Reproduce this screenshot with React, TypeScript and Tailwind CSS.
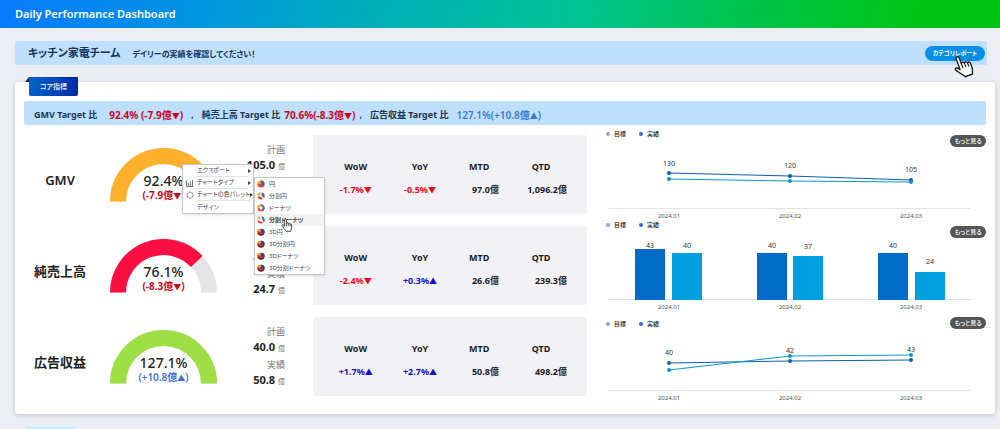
import { useState } from 'react';
import clsx from 'clsx';

interface Metric {
  label: string;
  value: string;
  trend?: 'up' | 'down';
}

interface Kpi {
  name: string;
  percent: string;
  ratio: number;
  color: string;
  diff: string;
  trend: 'up' | 'down';
  plan: string;
  actual: string;
  metrics: Metric[];
}

const kpis: Kpi[] = [
  {
    name: 'GMV',
    percent: '92.4%',
    ratio: 0.924,
    color: '#ffb12e',
    diff: '-7.9億',
    trend: 'down',
    plan: '105.0',
    actual: '97.0',
    metrics: [
      { label: 'WoW', value: '-1.7%', trend: 'down' },
      { label: 'YoY', value: '-0.5%', trend: 'down' },
      { label: 'MTD', value: '97.0億' },
      { label: 'QTD', value: '1,096.2億' },
    ],
  },
  {
    name: '純売上高',
    percent: '76.1%',
    ratio: 0.761,
    color: '#fb0f42',
    diff: '-8.3億',
    trend: 'down',
    plan: '35.0',
    actual: '24.7',
    metrics: [
      { label: 'WoW', value: '-2.4%', trend: 'down' },
      { label: 'YoY', value: '+0.3%', trend: 'up' },
      { label: 'MTD', value: '26.6億' },
      { label: 'QTD', value: '239.3億' },
    ],
  },
  {
    name: '広告収益',
    percent: '127.1%',
    ratio: 1,
    color: '#9fdf46',
    diff: '+10.8億',
    trend: 'up',
    plan: '40.0',
    actual: '50.8',
    metrics: [
      { label: 'WoW', value: '+1.7%', trend: 'up' },
      { label: 'YoY', value: '+2.7%', trend: 'up' },
      { label: 'MTD', value: '50.8億' },
      { label: 'QTD', value: '498.2億' },
    ],
  },
];

const months = ['2024.01', '2024.02', '2024.03'];
const monthX = [66, 187, 308];

const chartTypes = [
  { label: '円', kind: 'pie' },
  { label: '分割円', kind: 'split' },
  { label: 'ドーナツ', kind: 'donut' },
  { label: '分割ドーナツ', kind: 'splitDonut' },
  { label: '3D円', kind: 'pie3d' },
  { label: '3D分割円', kind: 'pie3d' },
  { label: '3Dドーナツ', kind: 'pie3d' },
  { label: '3D分割ドーナツ', kind: 'pie3d' },
];

function Mark({ trend }: { trend?: 'up' | 'down' }) {
  if (!trend) return null;
  return <span className="text-[8px]">{trend === 'up' ? '▲' : '▼'}</span>;
}

function HandCursor({ className }: { className?: string }) {
  return (
    <svg viewBox="0 0 20 24" className={className} aria-hidden="true">
      <path
        d="M6 14.5V3.2C6 .7 9.2.7 9.2 3.2V9.6C9.4 8 12.2 8 12.3 10C12.6 8.5 15.2 8.8 15.3 10.8C15.7 9.6 18 10 18 12V16.5C18 19.2 16.6 20.4 16.3 22.8H8.3C8 20.7 5 18.6 3.4 15.7C2.4 14 1 12.8 1.8 11.9C3 10.7 4.7 12.3 6 14.5Z"
        fill="#fff"
        stroke="#222"
        strokeWidth="1.4"
        strokeLinejoin="round"
      />
      <path d="M9.2 9.6V14M12.3 10V14M15.3 10.8V14.4" stroke="#222" strokeWidth="1.2" />
    </svg>
  );
}

function PieIcon({ kind }: { kind: string }) {
  const hollow = kind === 'donut' || kind === 'splitDonut';
  const split = kind === 'split' || kind === 'splitDonut';

  if (kind === 'pie3d') {
    return (
      <svg viewBox="0 0 16 16" className="h-2 w-2 shrink-0" aria-hidden="true">
        <path d="M1 7v3c0 7 14 7 14 0V7z" fill="#5c1f2b" />
        <ellipse cx="8" cy="7" rx="7" ry="5.5" fill="#c8382a" />
        <path d="M8 7V1.5c4 0 7 2.5 7 5.5 0 2-1 3.5-3 4.500z" fill="#27489c" />
        <path d="M8 7V1.5C4 1.5 1 4 1 7z" fill="#f4a02c" />
      </svg>
    );
  }
  return (
    <svg viewBox="0 0 16 16" className="h-2 w-2 shrink-0" aria-hidden="true">
      <circle cx="8" cy="8" r="7" fill="#e4492c" />
      <path d="M8 8H1a7 7 0 0 1 7-7z" fill="#f9ab2d" />
      <path d="M8 8V1a7 7 0 0 1 5 12z" fill="#2d6fc8" />
      {split && <path d="M8 0v8l6 6M8 8H0" stroke="#fff" strokeWidth="2.4" fill="none" />}
      {hollow && <circle cx="8" cy="8" r="3.4" fill="#fff" />}
    </svg>
  );
}

function Gauge({ kpi }: { kpi: Kpi }) {
  const radius = 45.5;
  const angle = Math.PI * (1 - kpi.ratio);
  const x = 53.5 + radius * Math.cos(angle);
  const y = 53.5 - radius * Math.sin(angle);

  return (
    <div className="grid w-[107px] shrink-0">
      <svg viewBox="0 0 107 54" className="col-start-1 row-start-1 w-full" aria-hidden="true">
        <path d="M8 53.5A45.5 45.5 0 0 1 99 53.5" fill="none" stroke="#e5e5e7" strokeWidth="16" />
        <path
          d={`M8 53.5A45.5 45.5 0 0 1 ${x} ${y}`}
          fill="none"
          stroke={kpi.color}
          strokeWidth="16"
        />
      </svg>
      <div className="col-start-1 row-start-1 self-end text-center">
        <div className="text-[14px] leading-4 font-medium text-[#222]">{kpi.percent}</div>
        <div
          className={clsx(
            'text-[10px] leading-3',
            kpi.trend === 'up' ? 'font-semibold text-[#3b73d9]' : 'font-bold text-[#c40d1e]',
          )}
        >
          ({kpi.diff}
          <Mark trend={kpi.trend} />)
        </div>
      </div>
    </div>
  );
}

function PlanActual({ kpi }: { kpi: Kpi }) {
  return (
    <dl className="flex-1 text-right whitespace-nowrap">
      {[
        ['計画', kpi.plan],
        ['実績', kpi.actual],
      ].map(([label, value]) => (
        <div key={label}>
          <dt className="text-[9px] leading-[15px] text-[#777]">{label}</dt>
          <dd className="text-[11px] leading-4 font-bold text-[#222]">
            {value} <span className="text-[7px] font-normal text-[#777]">億</span>
          </dd>
        </div>
      ))}
    </dl>
  );
}

function MetricTable({ metrics }: { metrics: Metric[] }) {
  return (
    <div className="rounded-xs bg-[#f1f1f6] pt-5 pr-3 pb-[13px] pl-[10px]">
      <table className="w-full table-fixed text-[9px] leading-[23px] font-bold text-[#1d1d1f]">
        <colgroup>
          <col className="w-[26%]" />
          <col className="w-[25%]" />
          <col className="w-[22%]" />
          <col className="w-[27%]" />
        </colgroup>
        <thead>
          <tr>
            {metrics.map((m) => (
              <th key={m.label} scope="col" className="p-0 text-center font-bold">
                {m.label}
              </th>
            ))}
          </tr>
        </thead>
        <tbody>
          <tr>
            {metrics.map((m) => (
              <td
                key={m.label}
                className={clsx(
                  'p-0 whitespace-nowrap',
                  m.trend ? 'text-center' : 'pr-2 text-right',
                  m.trend === 'up' && 'text-[#1a0fc8]',
                  m.trend === 'down' && 'text-[#ee0a1c]',
                )}
              >
                {m.value}
                <Mark trend={m.trend} />
              </td>
            ))}
          </tr>
        </tbody>
      </table>
    </div>
  );
}

interface LineChartProps {
  target: number[];
  actual: number[];
  labels: { text: string; y: number }[];
}

function Axis() {
  return (
    <>
      <path d="M5 57.5H368" stroke="#e3e3e3" />
      {months.map((month, i) => (
        <text key={month} x={monthX[i]} y="67" fontSize="6" fill="#555" textAnchor="middle">
          {month}
        </text>
      ))}
    </>
  );
}

function LineChart({ target, actual, labels }: LineChartProps) {
  const series = [
    { points: target, color: '#0a5fae' },
    { points: actual, color: '#0d94cd' },
  ];
  return (
    <svg viewBox="0 0 383 69" className="w-full overflow-visible">
      <Axis />
      {series.map(({ points, color }) => (
        <g key={color}>
          <polyline
            points={points.map((y, i) => `${monthX[i]},${y}`).join(' ')}
            fill="none"
            stroke={color}
          />
          {points.map((y, i) => (
            <circle key={i} cx={monthX[i]} cy={y} r="2" fill={color} />
          ))}
        </g>
      ))}
      {labels.map((label, i) => (
        <text
          key={i}
          x={monthX[i]}
          y={label.y}
          fontSize="7"
          fill="#333"
          textAnchor="middle"
        >
          {label.text}
        </text>
      ))}
    </svg>
  );
}

function BarChart() {
  const bars = [
    { x: 32, y: 7, value: 43, color: '#006cc8', labelY: 6 },
    { x: 69, y: 11, value: 40, color: '#009fe0', labelY: 6 },
    { x: 154, y: 11, value: 40, color: '#006cc8', labelY: 6 },
    { x: 190, y: 14, value: 37, color: '#009fe0', labelY: 7 },
    { x: 275, y: 11, value: 40, color: '#006cc8', labelY: 6 },
    { x: 312, y: 30, value: 24, color: '#009fe0', labelY: 22 },
  ];
  return (
    <svg viewBox="0 0 383 69" className="w-full overflow-visible">
      <Axis />
      {bars.map((bar) => (
        <g key={bar.x}>
          <rect x={bar.x} y={bar.y} width="30" height={58 - bar.y} fill={bar.color} />
          <text x={bar.x + 15} y={bar.labelY} fontSize="7" fill="#333" textAnchor="middle">
            {bar.value}
          </text>
        </g>
      ))}
    </svg>
  );
}

function ChartPanel({ low, children }: { low?: boolean; children: React.ReactNode }) {
  return (
    <div className="pl-4">
      <div className="flex h-[22px] items-start justify-between">
        <ul
          className={clsx(
            'flex gap-[13px] pl-[3px] text-[6px] leading-[10px] font-medium text-[#222]',
            low && 'pt-2',
          )}
        >
          <li className="flex items-center gap-1">
            <span className="size-1 rounded-full bg-[#8fa3dc]" />
            目標
          </li>
          <li className="flex items-center gap-1">
            <span className="size-1 rounded-full bg-[#2f62e0]" />
            実績
          </li>
        </ul>
        <button
          type="button"
          className="mt-1.5 h-3 w-9 rounded-full bg-[#555] text-[6px] leading-3 font-medium text-white"
        >
          もっと見る
        </button>
      </div>
      {children}
    </div>
  );
}

function Caret() {
  return (
    <svg viewBox="0 0 3 4" className="h-1 w-[3px] shrink-0" aria-hidden="true">
      <path d="M0 0l3 2-3 2z" fill="#444" />
    </svg>
  );
}

function ChartMenu() {
  const [selected, setSelected] = useState('分割ドーナツ');
  const item = 'flex w-full items-center text-left text-[6px] leading-3 text-[#444]';
  const label = 'flex-1 border-b border-[#e4e4e4] leading-[11px]';

  return (
    <div className="absolute top-[35px] left-[158px] z-10 flex items-start whitespace-nowrap">
      <div className="w-[72px] border border-[#c8c8c8] bg-white shadow-sm">
        <button type="button" className={clsx(item, 'pr-0.5')}>
          <span className="w-3.5 shrink-0" />
          <span className={label}>エクスポート</span>
          <Caret />
        </button>
        <button type="button" className={clsx(item, 'pr-0.5')}>
          <span className="w-3.5 shrink-0">
            <svg viewBox="0 0 16 16" className="ml-[3px] h-2 w-2" aria-hidden="true">
              <path d="M1 3v12h14M5 15V8M9 15V5M13 15V2" stroke="#777" strokeWidth="2" fill="none" />
            </svg>
          </span>
          <span className={label}>チャートタイプ</span>
          <Caret />
        </button>
        <button type="button" className={clsx(item, 'pr-0.5')}>
          <span className="w-3.5 shrink-0">
            <svg viewBox="0 0 16 16" className="ml-[3px] h-2 w-2" aria-hidden="true">
              <circle
                cx="8"
                cy="8"
                r="6"
                stroke="#999"
                strokeWidth="2.5"
                strokeDasharray="5 1"
                fill="none"
              />
            </svg>
          </span>
          <span className={label}>チャートの色パレット</span>
          <Caret />
        </button>
        <button type="button" className={item}>
          <span className="w-3.5 shrink-0" />
          デザイン
        </button>
      </div>
      <div className="relative mt-[13px] w-[71px] border border-[#c8c8c8] bg-white shadow-sm">
        {chartTypes.map((type) => (
          <button
            key={type.label}
            type="button"
            onClick={() => setSelected(type.label)}
            className={clsx(
              item,
              'gap-1 pl-0.5',
              type.label === selected && 'bg-[#f2f2f2] font-bold text-[#111]',
            )}
          >
            <PieIcon kind={type.kind} />
            {type.label}
          </button>
        ))}
        <HandCursor className="pointer-events-none absolute top-10 left-[26px] h-3.5 w-3" />
      </div>
    </div>
  );
}

export default function App() {
  return (
    <div
      lang="ja"
      className="min-h-screen bg-[#ebeef3] font-['Noto_Sans','Noto_Sans_CJK_JP',sans-serif] [font-feature-settings:'palt']"
    >
      <header className="flex h-7 items-center bg-[linear-gradient(100deg,#087aff_0%,#0095e0_20%,#00b0b8_38%,#00c392_58%,#00c455_72%,#00c414_92%)] pl-[15px]">
        <h1 className="text-[11px] font-semibold text-white">Daily Performance Dashboard</h1>
      </header>

      <main className="pt-[13px] pr-[5px] pl-[15px]">
        {/* Team banner */}
        <section className="mr-2 flex h-6 items-center rounded-xs bg-[#bfdfff] pr-0.5 pl-[13px] text-[#12365c]">
          <h2 className="text-[11px] font-semibold">キッチン家電チーム</h2>
          <p className="ml-3 pt-0.5 text-[8px] font-semibold">
            デイリーの実績を確認してください！
          </p>
          <div className="relative ml-auto">
            <button
              type="button"
              className="block h-[15px] w-[60px] rounded-full bg-[#0a8fe6] text-[6px] leading-[15px] font-bold text-white"
            >
              カテゴリレポート
            </button>
            <HandCursor className="pointer-events-none absolute top-2 left-7 h-6 w-5 -rotate-20" />
          </div>
        </section>

        {/* Core KPI card */}
        <section className="relative mt-[17px] rounded-sm bg-white px-[9px] pt-[19px] pb-3 shadow-[0_1px_5px_rgba(0,0,0,0.18)]">
          <svg
            viewBox="0 0 4 5"
            className="absolute -top-[5px] left-[10px] h-[5px] w-1"
            aria-hidden="true"
          >
            <path d="M4 0v5H0z" fill="#0b2d63" />
          </svg>
          <h3 className="absolute -top-[5px] left-[14px] h-[19px] w-[49px] rounded-b-xs bg-linear-to-r from-[#0063c9] to-[#0029a5] text-center text-[7px] leading-[20px] font-medium text-white">
            コア指標
          </h3>

          <div className="mb-1 flex h-6 items-center rounded-xs bg-[#bfdfff] pt-1 pl-[10px] text-[9px] font-bold whitespace-nowrap text-[#20364c]">
            <span>GMV Target 比</span>
            <span className="ml-3 text-[10px] text-[#c9081c]">
              92.4% (-7.9億
              <Mark trend="down" />)
            </span>
            <span className="ml-2">,</span>
            <span className="ml-2">純売上高 Target 比</span>
            <span className="ml-1 text-[10px] text-[#c9081c]">
              70.6%(-8.3億
              <Mark trend="down" />)
            </span>
            <span className="ml-1">,</span>
            <span className="ml-2">広告収益 Target 比</span>
            <span className="ml-2 text-[10px] font-semibold text-[#3b78d8]">
              127.1%(+10.8億
              <Mark trend="up" />)
            </span>
          </div>

          {kpis.map((kpi, i) => (
            <div
              key={kpi.name}
              className="relative grid min-h-[91px] grid-cols-[289fr_274fr_399fr] items-center"
            >
              <div className="flex items-center pr-7">
                <h4 className="w-[72px] shrink-0 pt-3 text-center text-[13px] font-semibold text-[#222]">
                  {kpi.name}
                </h4>
                <div className="pl-3.5">
                  <Gauge kpi={kpi} />
                </div>
                <PlanActual kpi={kpi} />
              </div>
              <MetricTable metrics={kpi.metrics} />
              {i === 0 && (
                <ChartPanel>
                  <LineChart
                    target={[22, 25, 29]}
                    actual={[28, 30, 31]}
                    labels={[
                      { text: '130', y: 15 },
                      { text: '120', y: 17 },
                      { text: '105', y: 21 },
                    ]}
                  />
                </ChartPanel>
              )}
              {i === 1 && (
                <ChartPanel>
                  <BarChart />
                </ChartPanel>
              )}
              {i === 2 && (
                <ChartPanel low>
                  <LineChart
                    target={[30, 28, 27]}
                    actual={[37, 23, 22]}
                    labels={[
                      { text: '40', y: 22 },
                      { text: '42', y: 20 },
                      { text: '43', y: 19 },
                    ]}
                  />
                </ChartPanel>
              )}
              {i === 0 && <ChartMenu />}
            </div>
          ))}
        </section>

        {/* Top edge of the next section */}
        <div className="mt-[13px] ml-3 h-0.5 w-[49px] bg-[#c3eeff]" />
      </main>
    </div>
  );
}
